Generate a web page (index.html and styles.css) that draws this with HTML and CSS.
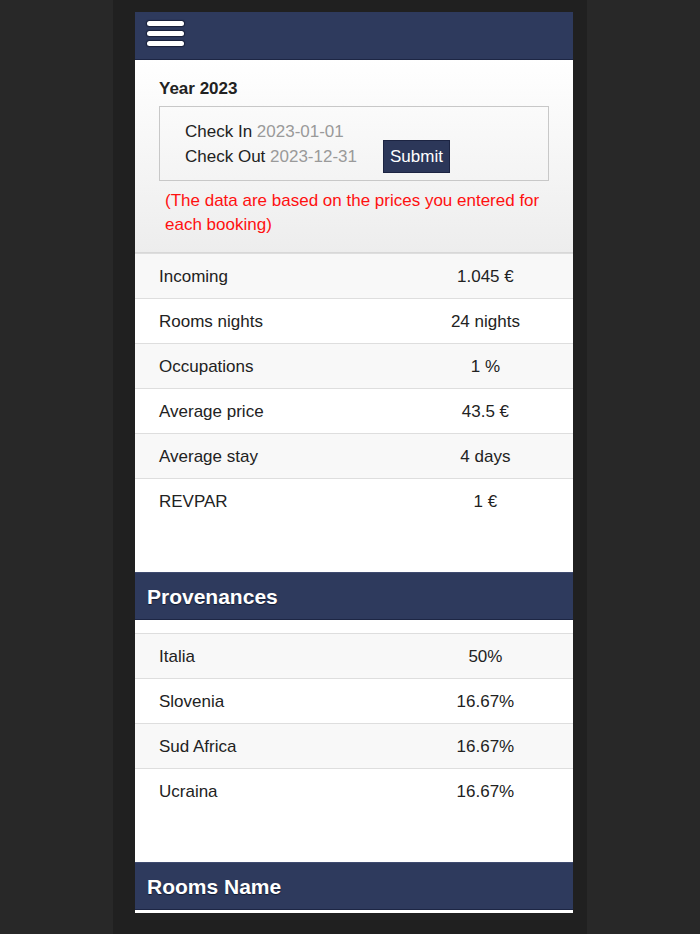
FILE: index.html
```html
<!DOCTYPE html>
<html lang="en">
<head>
<meta charset="utf-8">
<title>Statistics</title>
<link rel="stylesheet" href="styles.css">
</head>
<body>
<div class="frame">
  <div class="panel">
    <header class="topbar">
      <button class="menu" aria-label="Menu"><span></span><span></span><span></span></button>
    </header>

    <section class="filter">
      <div class="year">Year 2023</div>
      <div class="range">
        <div class="line">Check In <span class="date">2023-01-01</span></div>
        <div class="line row">
          <span>Check Out <span class="date">2023-12-31</span></span>
          <button class="submit">Submit</button>
        </div>
      </div>
      <p class="note">(The data are based on the prices you entered for each booking)</p>
    </section>

    <div class="table">
      <div class="tr"><div class="td">Incoming</div><div class="td val">1.045 €</div></div>
      <div class="tr"><div class="td">Rooms nights</div><div class="td val">24 nights</div></div>
      <div class="tr"><div class="td">Occupations</div><div class="td val">1 %</div></div>
      <div class="tr"><div class="td">Average price</div><div class="td val">43.5 €</div></div>
      <div class="tr"><div class="td">Average stay</div><div class="td val">4 days</div></div>
      <div class="tr"><div class="td">REVPAR</div><div class="td val">1 €</div></div>
    </div>

    <h3 class="bar">Provenances</h3>
    <div class="table spaced">
      <div class="tr"><div class="td">Italia</div><div class="td val">50%</div></div>
      <div class="tr"><div class="td">Slovenia</div><div class="td val">16.67%</div></div>
      <div class="tr"><div class="td">Sud Africa</div><div class="td val">16.67%</div></div>
      <div class="tr"><div class="td">Ucraina</div><div class="td val">16.67%</div></div>
    </div>

    <h3 class="bar">Rooms Name</h3>
  </div>
</div>
</body>
</html>
```

FILE: styles.css
```css
* { box-sizing: border-box; }
html, body { margin: 0; padding: 0; }
body {
  background: #282828;
  font-family: "Liberation Sans", Arial, Helvetica, sans-serif;
  font-size: 17px;
  color: #222;
  height: 934px;
  overflow: hidden;
}
.frame {
  width: 474px;
  height: 934px;
  margin-left: 113px;
  background: #202020;
  padding: 12px 14px 0 22px;
}
.panel {
  height: 901px;
  overflow: hidden;
  background: #fff;
}
.topbar {
  height: 48px;
  background: #2e3a5d;
  border-bottom: 1px solid #1d2644;
  padding: 9px 0 0 12px;
}
.menu {
  display: flex;
  flex-direction: column;
  gap: 5px;
  padding: 0;
  margin: 0;
  border: 0;
  background: transparent;
  width: 37px;
}
.menu span {
  display: block;
  width: 37px;
  height: 5px;
  background: #fff;
  border-radius: 3px;
  box-shadow: 0 0 1px 1px rgba(10, 15, 35, 0.6);
}
.filter {
  background: linear-gradient(#ffffff, #ededed);
  padding: 19px 24px 15px 24px;
  border-bottom: 1px solid #d8d8d8;
}
.year {
  font-weight: bold;
  font-size: 17px;
  line-height: 20px;
  color: #222;
}
.range {
  margin-top: 7px;
  border: 1px solid #c8c8c8;
  padding: 16px 0 7px 25px;
  height: 75px;
}
.line {
  line-height: 17px;
  color: #222;
}
.row {
  display: flex;
  align-items: center;
  height: 33px;
}
.date { color: #9a9a9a; }
.submit {
  margin-left: 26px;
  height: 33px;
  padding: 0 6px;
  background: #2c3759;
  color: #fff;
  border: 1px solid #1c2442;
  font-family: inherit;
  font-size: 17px;
  line-height: 31px;
}
.note {
  margin: 8px 0 0 0;
  padding-left: 6px;
  color: #ff1010;
  line-height: 24px;
}
.table { margin-bottom: 49px; }
.table.spaced { margin-top: 13px; }
.tr {
  display: grid;
  grid-template-columns: 60% 40%;
  height: 45px;
  border-top: 1px solid #dedede;
  align-items: center;
  padding-top: 2px;
}
.tr:nth-child(odd) { background: #f8f8f8; }
.td { padding-left: 24px; }
.td.val { padding-left: 0; text-align: center; }
.bar {
  margin: 0;
  height: 48px;
  background: #2e3a5d;
  border-top: 1px solid #3f4b70;
  border-bottom: 1px solid #1d2644;
  color: #fff;
  font-size: 21px;
  font-weight: bold;
  line-height: 48px;
  padding-left: 12px;
  text-shadow: 0 1px 1px #121a30;
}
```
